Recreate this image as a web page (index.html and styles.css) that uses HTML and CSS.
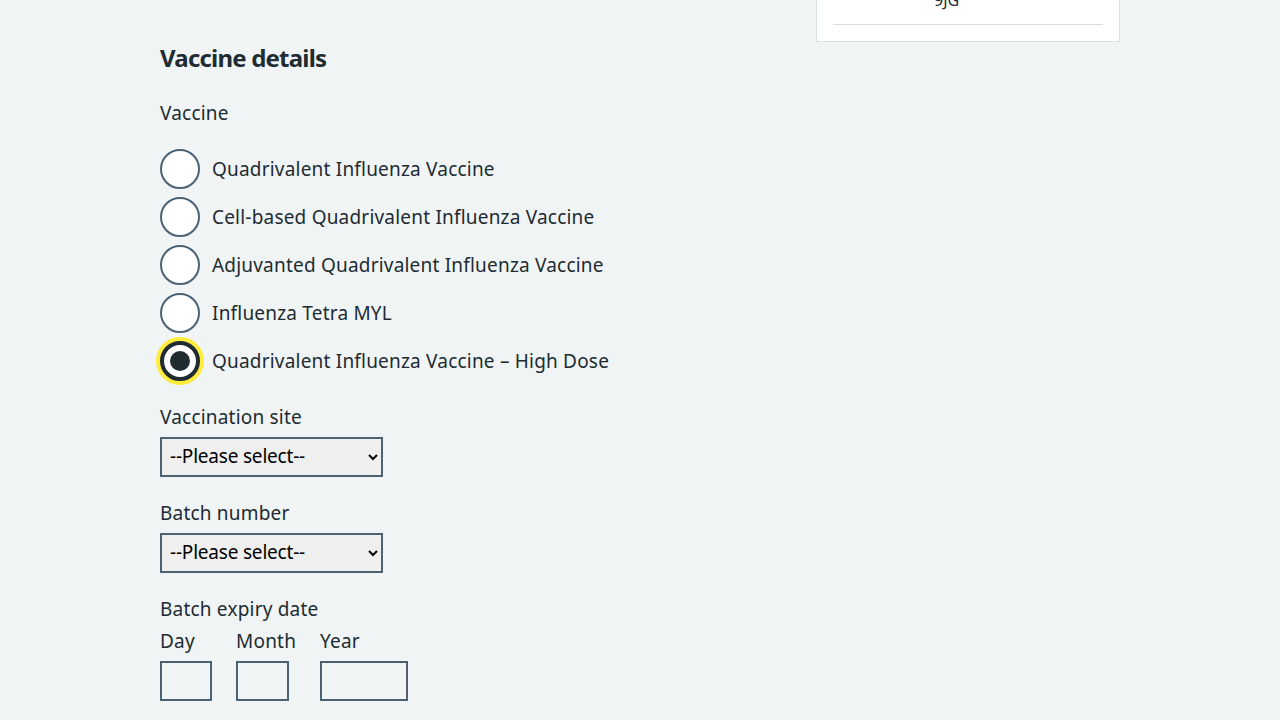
FILE: index.html
```html
<!DOCTYPE html>
<html lang="en">
<head>
<meta charset="utf-8">
<title>Vaccine details</title>
<link rel="stylesheet" href="styles.css">
</head>
<body>
<div class="page">
  <main class="main">
    <h2 class="heading">Vaccine details</h2>
    <fieldset class="group">
      <legend class="legend">Vaccine</legend>
      <div class="radios">
        <label class="radio"><input type="radio" name="vaccine"><span class="radio-text">Quadrivalent Influenza Vaccine</span></label>
        <label class="radio"><input type="radio" name="vaccine"><span class="radio-text">Cell-based Quadrivalent Influenza Vaccine</span></label>
        <label class="radio"><input type="radio" name="vaccine"><span class="radio-text">Adjuvanted Quadrivalent Influenza Vaccine</span></label>
        <label class="radio"><input type="radio" name="vaccine"><span class="radio-text">Influenza Tetra MYL</span></label>
        <label class="radio"><input type="radio" name="vaccine" class="focused" checked><span class="radio-text">Quadrivalent Influenza Vaccine – High Dose</span></label>
      </div>
    </fieldset>
    <div class="group">
      <label class="label" for="site">Vaccination site</label>
      <select class="select" id="site"><option>--Please select--</option></select>
    </div>
    <div class="group">
      <label class="label" for="batch">Batch number</label>
      <select class="select" id="batch"><option>--Please select--</option></select>
    </div>
    <fieldset class="group">
      <legend class="label legend-date">Batch expiry date</legend>
      <div class="date">
        <div class="date-item"><label class="date-label" for="d">Day</label><input class="input w2" id="d" type="text"></div>
        <div class="date-item"><label class="date-label" for="m">Month</label><input class="input w2" id="m" type="text"></div>
        <div class="date-item"><label class="date-label" for="y">Year</label><input class="input w4" id="y" type="text"></div>
      </div>
    </fieldset>
  </main>
  <aside class="side">
    <div class="card">
      <div class="card-row"><span class="card-key">Postcode</span><span class="card-val">AB1<br>9JG</span></div>
      <hr class="card-rule">
    </div>
  </aside>
</div>
</body>
</html>
```
FILE: styles.css
```css
html, body {
  margin: 0;
  padding: 0;
  background: #f0f4f5;
  color: #212b32;
  font-family: "Noto Sans", sans-serif;
  font-size: 19px;
}
.page {
  width: 960px;
  margin: 0 auto;
  display: grid;
  grid-template-columns: 640px 304px;
  column-gap: 16px;
  align-items: start;
}
.main {
  padding-top: 42px;
  letter-spacing: 0.2px;
}
.heading {
  font-size: 24px;
  font-weight: 700;
  line-height: 32px;
  letter-spacing: -0.8px;
  margin: 0 0 25px;
}
.group {
  border: 0;
  margin: 0 0 22px;
  padding: 0;
  min-width: 0;
}
.legend {
  padding: 0;
  line-height: 28px;
  margin-bottom: 22px;
  float: left;
  width: 100%;
}
.radios { clear: both; }
.radio {
  display: flex;
  align-items: center;
  gap: 12px;
  margin-bottom: 8px;
  line-height: 28px;
}
.radio:last-child { margin-bottom: 0; }
.radio input {
  appearance: none;
  -webkit-appearance: none;
  margin: 0;
  width: 40px;
  height: 40px;
  border: 2px solid #4c6272;
  border-radius: 50%;
  background: #fff;
  flex: none;
  box-sizing: border-box;
  position: relative;
}
.radio input:checked {
  border: 4px solid #212b32;
}
.radio input:checked::after {
  content: "";
  position: absolute;
  left: 6px;
  top: 6px;
  width: 20px;
  height: 20px;
  border-radius: 50%;
  background: #212b32;
}
.radio input.focused {
  box-shadow: 0 0 0 4px #ffeb3b;
}
.label {
  display: block;
  padding: 0;
  line-height: 28px;
  margin-bottom: 6px;
}
.legend-date {
  margin-bottom: 4px;
}
.select {
  display: block;
  width: 223px;
  height: 40px;
  box-sizing: border-box;
  border: 2px solid #4c6272;
  border-radius: 0;
  background-color: #efefef;
  color: #000;
  font-family: inherit;
  font-size: 19px;
  letter-spacing: -0.2px;
  padding: 0 4px 3px 4px;
  margin: 0;
}
.date {
  display: flex;
  gap: 24px;
}
.date-item {
  display: flex;
  flex-direction: column;
  align-items: flex-start;
}
.date-label {
  line-height: 28px;
  margin-bottom: 6px;
}
.input {
  height: 40px;
  box-sizing: border-box;
  border: 2px solid #4c6272;
  border-radius: 0;
  background: transparent;
  margin: 0;
  padding: 4px;
  font-size: 19px;
  font-family: inherit;
}
.w2 { width: 52px; }
.date-item:nth-child(2) .w2 { width: 53px; }
.w4 { width: 88px; }
.side {
  margin-top: -41px;
}
.card {
  background: #fff;
  border: 1px solid #d8dde0;
  padding: 4px 16px 16px;
}
.card-row {
  display: flex;
  font-size: 16px;
  line-height: 24px;
  padding-bottom: 12px;
}
.card-key {
  width: 101px;
  flex: none;
  visibility: hidden;
}
.card-rule {
  border: 0;
  border-top: 1px solid #d8dde0;
  margin: 0;
}
```
